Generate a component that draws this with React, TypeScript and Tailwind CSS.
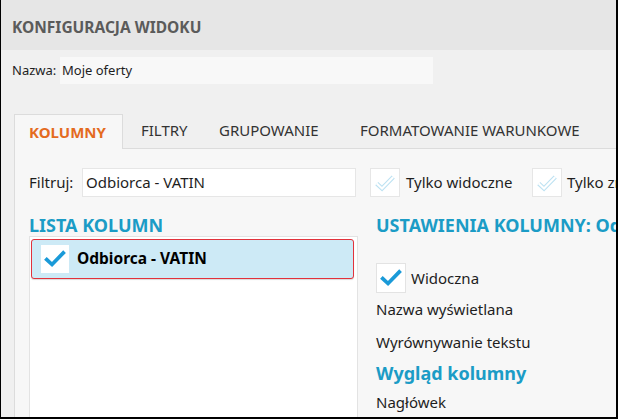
import React from "react";

const BlueCheck = ({ size = 22 }: { size?: number }) => (
  <svg width={size} height={size} viewBox="0 0 20 20">
    <path d="M2.5 10.5 L7.3 15 L17.5 4.5" fill="none" stroke="#1a9ad8" strokeWidth="3.4" strokeLinecap="square" strokeLinejoin="miter" />
  </svg>
);

const FadedCheck = () => (
  <svg width="22" height="22" viewBox="0 0 20 20">
    <path d="M2.5 10.5 L7.3 15 L17.5 4.5" fill="none" stroke="#bde2f2" strokeWidth="4" strokeLinejoin="miter" />
    <path d="M2.5 10.5 L7.3 15 L17.5 4.5" fill="none" stroke="#ffffff" strokeWidth="2" strokeLinejoin="miter" />
  </svg>
);

export default function App() {
  const font = { fontFamily: '"Noto Sans", "Open Sans", sans-serif' };
  return (
    <div
      className="w-[618px] h-[419px] overflow-hidden border-l border-r-2 border-b-2 border-black bg-[#f0f0f0] flex flex-col text-[#1e1e1e]"
      style={font}
    >
      <div className="h-[50px] shrink-0 bg-[#e6e6e6] flex items-center pl-[11px] pt-[5px]">
        <span className="text-[15.5px] font-bold text-[#5b5b5b]">KONFIGURACJA WIDOKU</span>
      </div>

      <div className="flex items-center mt-[7px] pl-[11px] h-[27px] shrink-0">
        <span className="text-[13px] w-[48px]">Nazwa:</span>
        <div className="h-[27px] w-[373px] bg-[#f8f8f8] flex items-center pl-[2px] text-[13px]">Moje oferty</div>
      </div>

      <div className="flex flex-1 min-h-0 mt-[29px] pl-[13px] flex-col">
        <div className="flex items-end h-[35px] shrink-0 text-[15px] text-[#333] whitespace-nowrap">
          <div className="h-[35px] w-[109px] shrink-0 bg-[#f7f7f7] border border-b-0 border-[#dcdcdc] flex items-center justify-center font-bold text-[#e46b1f] relative -mb-px z-10 pr-[2px]">
            KOLUMNY
          </div>
          <div className="h-[35px] w-[96px] shrink-0 flex items-center pl-[18px]">FILTRY</div>
          <div className="h-[35px] w-[141px] shrink-0 flex items-center">GRUPOWANIE</div>
          <div className="h-[35px] flex items-center">FORMATOWANIE WARUNKOWE</div>
        </div>

        <div className="flex-1 bg-[#f7f7f7] border-l border-t border-[#dcdcdc] flex flex-col pl-[14px]">
          <div className="flex items-center mt-[19px] h-[29px] shrink-0 text-[15px] whitespace-nowrap">
            <span className="w-[53px] shrink-0">Filtruj:</span>
            <div className="h-[29px] w-[274px] shrink-0 bg-white border border-[#e6e6e6] flex items-center pl-[3px]">Odbiorca - VATIN</div>
            <div className="ml-[14px] h-[29px] w-[30px] shrink-0 bg-white border border-[#e6e6e6] flex items-center justify-center">
              <FadedCheck />
            </div>
            <span className="ml-[6px] w-[126px] shrink-0">Tylko widoczne</span>
            <div className="h-[29px] w-[30px] shrink-0 bg-white border border-[#e6e6e6] flex items-center justify-center">
              <FadedCheck />
            </div>
            <span className="ml-[5px]">Tylko zmienione</span>
          </div>

          <div className="flex flex-1 min-h-0 mt-[17px]">
            <div className="w-[329px] shrink-0 flex flex-col">
              <div className="h-[22px] leading-[22px] text-[18px] font-bold text-[#1b9cc6] whitespace-nowrap">LISTA KOLUMN</div>
              <div className="flex-1 bg-white border border-[#e3e3e3] border-b-0 pl-[1px] pr-[3px] pt-[2px]">
                <div className="h-[40px] bg-[#cdeaf6] border border-[#e2323c] rounded-[3px] flex items-center pl-[9px] shadow-[0_1px_1px_rgba(0,0,0,0.15)]">
                  <div className="h-[28px] w-[28px] bg-white flex items-center justify-center">
                    <BlueCheck />
                  </div>
                  <span className="ml-[8px] text-[15.5px] font-bold text-black">Odbiorca - VATIN</span>
                </div>
              </div>
            </div>

            <div className="flex-1 pl-[18px] flex flex-col whitespace-nowrap text-[15px]">
              <div className="h-[22px] leading-[22px] text-[18px] font-bold text-[#1b9cc6]">USTAWIENIA KOLUMNY: Odbiorca - VATIN</div>
              <div className="flex items-center mt-[27px] h-[30px]">
                <div className="h-[30px] w-[30px] bg-white border border-[#e3e3e3] flex items-center justify-center">
                  <BlueCheck />
                </div>
                <span className="ml-[5px]">Widoczna</span>
              </div>
              <div className="mt-[6px] h-[20px] leading-[20px]">Nazwa wyświetlana</div>
              <div className="mt-[13px] h-[20px] leading-[20px]">Wyrównywanie tekstu</div>
              <div className="mt-[9px] h-[24px] leading-[24px] text-[18px] font-bold text-[#1b9cc6]">Wygląd kolumny</div>
              <div className="mt-[7px] h-[20px] leading-[20px]">Nagłówek</div>
            </div>
          </div>
        </div>
      </div>
    </div>
  );
}
